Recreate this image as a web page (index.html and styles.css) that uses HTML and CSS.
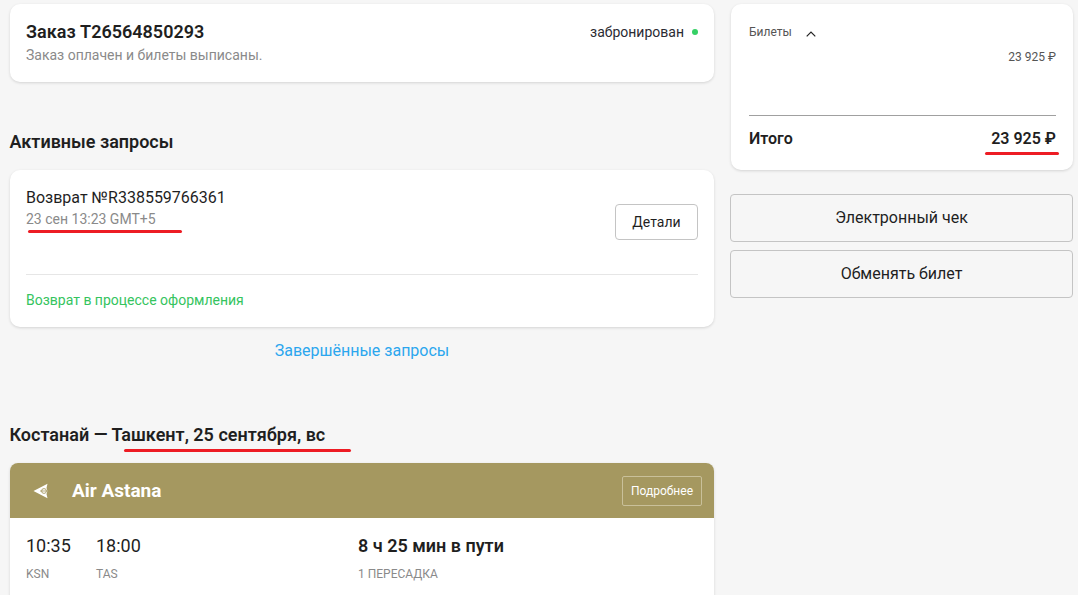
FILE: index.html
```html
<!DOCTYPE html>
<html>
<head>
    <title>Заказ T26564850293</title>
    <link rel="stylesheet" href="styles.css">
</head>
<body>
    <div class="page">
        <div class="main">
            <!-- Order -->
            <div class="card order">
                <div>
                    <div class="order-title">Заказ T26564850293</div>
                    <div class="order-sub">Заказ оплачен и билеты выписаны.</div>
                </div>
                <div class="order-status">забронирован<span class="dot"></span></div>
            </div>

            <!-- Requests -->
            <h2 class="section-title requests-title">Активные запросы</h2>
            <div class="card request">
                <div class="request-top">
                    <div>
                        <div class="request-name">Возврат №R338559766361</div>
                        <div class="request-date">23 сен 13:23 GMT+5<span class="mark mark-date"></span></div>
                    </div>
                    <button class="details-btn">Детали</button>
                </div>
                <div class="request-state">Возврат в процессе оформления</div>
            </div>
            <a class="done-link" href="#">Завершённые запросы</a>

            <!-- Flight -->
            <h2 class="section-title flight-title">Костанай — Ташкент, 25 сентября, вс<span class="mark mark-flight"></span></h2>
            <div class="card flight">
                <div class="flight-head">
                    <svg class="airline-logo" width="16" height="16" viewBox="0 0 16 16">
                        <path d="M0.5 8 L14.5 0.8 L13.5 5 L14.5 8 L13.5 11 L14.5 15.2 Z" fill="#fff"/>
                        <circle cx="11" cy="8" r="2.4" fill="none" stroke="#a59860" stroke-width="0.9"/>
                        <path d="M7 8 H15" stroke="#a59860" stroke-width="0.8"/>
                    </svg>
                    <span class="airline-name">Air Astana</span>
                    <button class="more-btn">Подробнее</button>
                </div>
                <div class="flight-body">
                    <div class="flight-col col-from">
                        <div class="time">10:35</div>
                        <div class="code">KSN</div>
                    </div>
                    <div class="flight-col col-to">
                        <div class="time">18:00</div>
                        <div class="code">TAS</div>
                    </div>
                    <div class="flight-col">
                        <div class="time duration">8 ч 25 мин в пути</div>
                        <div class="code">1 ПЕРЕСАДКА</div>
                    </div>
                </div>
            </div>
        </div>

        <div class="side">
            <div class="card summary">
                <div class="summary-toggle">
                    Билеты
                    <svg width="10" height="6" viewBox="0 0 10 6"><path d="M0.7 5.3 L5 1 L9.3 5.3" fill="none" stroke="#222" stroke-width="1.2"/></svg>
                </div>
                <div class="summary-price">23 925 ₽</div>
                <div class="summary-total">
                    <span>Итого</span>
                    <span class="total-sum">23 925 ₽<span class="mark mark-total"></span></span>
                </div>
            </div>
            <button class="side-btn receipt-btn">Электронный чек</button>
            <button class="side-btn">Обменять билет</button>
        </div>
    </div>
</body>
</html>
```
FILE: styles.css
```css
html, body {
    height: 100%;
    overflow: hidden;
}
body {
    margin: 0;
    background-color: #f6f6f6;
    font-family: Roboto, 'Liberation Sans', sans-serif;
    color: #1f1f1f;
}
.page {
    display: flex;
    align-items: flex-start;
    gap: 16px;
    padding: 4px 5px 0 10px;
}
.main {
    width: 704px;
    flex: none;
}
.side {
    width: 343px;
    flex: none;
}
.card {
    background-color: #fff;
    border-radius: 10px;
    box-shadow: 0 1px 3px rgba(0, 0, 0, 0.14);
}
button {
    font-family: inherit;
    cursor: pointer;
}

.order {
    display: flex;
    justify-content: space-between;
    height: 78px;
    box-sizing: border-box;
    padding: 16px;
}
.order-title {
    font-size: 18px;
    font-weight: 600;
    line-height: 24px;
}
.order-sub {
    margin-top: 1px;
    font-size: 14px;
    line-height: 20px;
    color: #8a8a8a;
}
.order-status {
    display: flex;
    align-items: center;
    height: 24px;
    font-size: 14px;
    color: #2b2b33;
}
.dot {
    width: 6px;
    height: 6px;
    margin-left: 8px;
    border-radius: 50%;
    background-color: #35d065;
}

.section-title {
    margin: 0 0 0 -0.5px;
    font-size: 18px;
    font-weight: 600;
    line-height: 24px;
}
.requests-title {
    margin-top: 48px;
}
.request {
    margin-top: 16px;
    height: 157px;
    box-sizing: border-box;
    padding: 17px 16px 16px;
}
.request-top {
    display: flex;
    justify-content: space-between;
    align-items: center;
    height: 88px;
    padding-bottom: 16px;
    box-sizing: border-box;
    border-bottom: 1px solid #e6e6e6;
}
.request-top > div {
    align-self: flex-start;
}
.request-name {
    font-size: 16px;
    line-height: 21px;
}
.request-date {
    position: relative;
    font-size: 14px;
    line-height: 22px;
    color: #8a8a8a;
}
.details-btn {
    width: 83px;
    height: 36px;
    margin-top: -2px;
    padding: 0;
    background-color: #fff;
    border: 1px solid #c4c4c4;
    border-radius: 4px;
    font-size: 14px;
    color: #1f1f1f;
}
.request-state {
    margin-top: 15px;
    font-size: 14px;
    line-height: 20px;
    color: #35c45e;
}
.done-link {
    display: block;
    margin-top: 13px;
    text-align: center;
    font-size: 16px;
    line-height: 22px;
    color: #2ba6ee;
    text-decoration: none;
}

.flight-title {
    position: relative;
    margin-top: 61px;
}
.flight {
    margin-top: 16px;
    overflow: hidden;
    border-radius: 8px;
}
.flight-head {
    display: flex;
    align-items: center;
    height: 55px;
    padding: 0 12px 0 23px;
    background-color: #a59860;
}
.airline-name {
    margin-left: 23px;
    font-size: 19px;
    font-weight: 700;
    color: #fff;
}
.more-btn {
    width: 80px;
    height: 30px;
    margin-left: auto;
    padding: 0;
    background: none;
    border: 1px solid #c9c09a;
    border-radius: 2px;
    font-size: 12px;
    color: #fff;
}
.flight-body {
    display: flex;
    height: 90px;
    padding: 16px 16px 0;
}
.col-from {
    width: 70px;
}
.col-to {
    width: 262px;
}
.time {
    font-size: 18px;
    line-height: 24px;
}
.duration {
    font-weight: 600;
}
.code {
    margin-top: 8px;
    font-size: 12px;
    line-height: 16px;
    color: #8a8a8a;
}

.summary {
    height: 166px;
    box-sizing: border-box;
    padding: 20px 17px 0 18px;
    margin-left: 1px;
}
.summary-toggle {
    display: flex;
    align-items: center;
    gap: 14px;
    font-size: 12px;
    line-height: 16px;
    color: #555;
}
.summary-toggle svg {
    margin-top: 3px;
}
.summary-price {
    margin-top: 9px;
    text-align: right;
    font-size: 12px;
    line-height: 16px;
    color: #555;
}
.summary-total {
    display: flex;
    justify-content: space-between;
    margin-top: 50px;
    padding-top: 12px;
    border-top: 1px solid #a0a0a0;
    font-size: 16px;
    font-weight: 600;
    line-height: 22px;
}
.total-sum {
    position: relative;
}
.side-btn {
    display: block;
    width: 100%;
    height: 48px;
    margin-top: 8px;
    padding: 0 0 2px;
    background-color: #f6f6f6;
    border: 1px solid #c4c4c4;
    border-radius: 4px;
    font-size: 16px;
    color: #1f1f1f;
}
.receipt-btn {
    margin-top: 24px;
}

/* red marker strokes on top of the screenshot */
.mark {
    position: absolute;
    height: 3px;
    border-radius: 2px;
    background-color: #ed1c24;
}
.mark-date {
    left: 2px;
    top: 22px;
    width: 154px;
}
.mark-flight {
    left: 114px;
    top: 26px;
    width: 227px;
}
.mark-total {
    left: -6px;
    top: 24px;
    width: 74px;
}
```
